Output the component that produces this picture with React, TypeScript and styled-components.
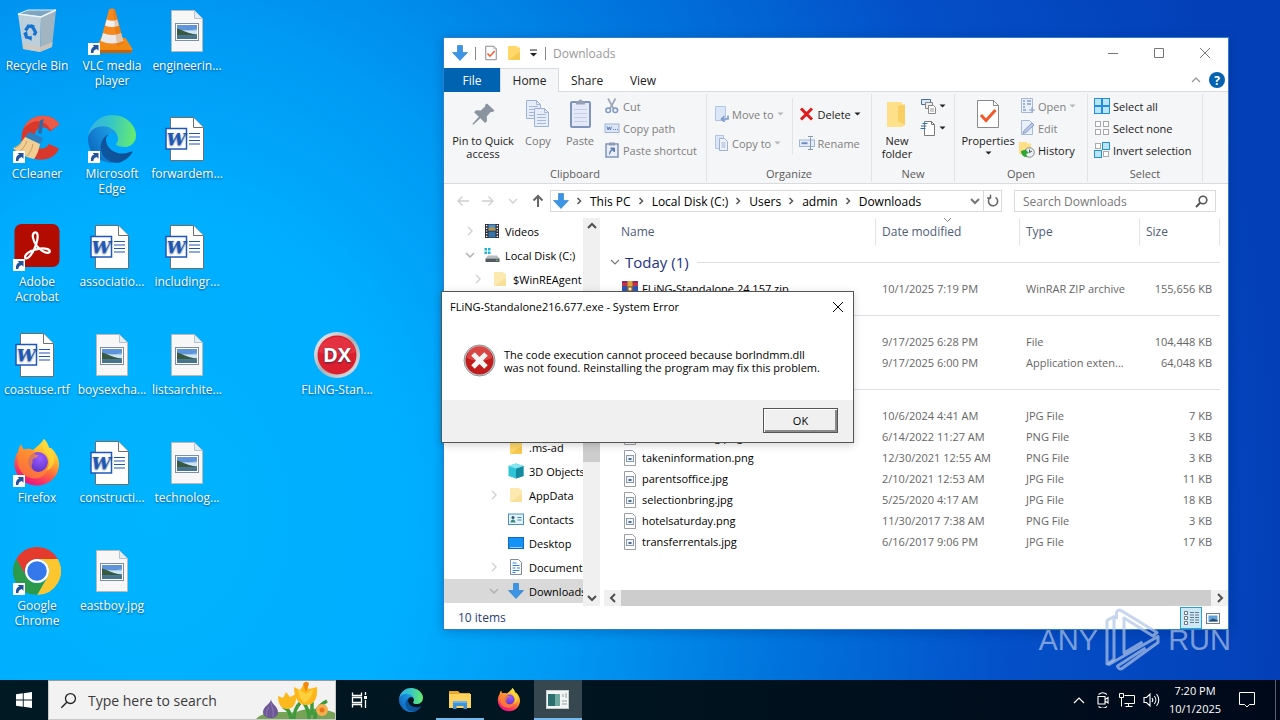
import React from "react";
import styled, { createGlobalStyle, css } from "styled-components";

const GlobalStyle = createGlobalStyle`
  *, *::before, *::after { box-sizing: border-box; }
  html, body { margin: 0; padding: 0; }
  body { font-family: "Open Sans", "Noto Sans", sans-serif; font-size: 11px; color: #000; }
  button, input { font: inherit; color: inherit; }
  button { margin: 0; padding: 0; border: 0; background: none; cursor: default; }
  svg { display: block; flex: none; }
`;

/* ---------- shell ---------- */

const Screen = styled.div`
  display: flex;
  flex-direction: column;
  height: 100vh;
  overflow: hidden;
`;

const Desktop = styled.main`
  position: relative;
  flex: 1;
  min-height: 0;
  overflow: hidden;
  background: radial-gradient(ellipse 80% 180% at 12% 76%, #00b4ff 0%, #00aeff 25%, #009bf4 40%, #0074dc 62%, #0450c8 84%, #0340b8 110%);
`;

const IconGrid = styled.ul`
  display: grid;
  grid-auto-flow: column;
  grid-template-rows: repeat(6, 108px);
  grid-template-columns: repeat(5, 75px);
  justify-content: start;
  margin: 0;
  padding: 0;
  list-style: none;
`;

const Shortcut = styled.li<{ $col: number; $row: number }>`
  grid-column: ${(p) => p.$col};
  grid-row: ${(p) => p.$row};
`;

const ShortcutButton = styled.button`
  display: flex;
  flex-direction: column;
  align-items: center;
  gap: 3px;
  width: 74px;
  padding: 7px 0 0;
  color: #fff;
  font-size: 12px;
  line-height: 15px;
  white-space: nowrap;
  text-shadow: 0 1px 2px rgba(0, 40, 90, 0.7);
`;

/* ---------- explorer window ---------- */

const Explorer = styled.section`
  position: absolute;
  left: 443px;
  top: 37px;
  right: 51px;
  bottom: 50px;
  display: flex;
  flex-direction: column;
  border: 1px solid #2f7fc8;
  background: #fff;
  box-shadow: 0 2px 10px rgba(0, 20, 80, 0.25);
`;

const TitleBar = styled.header`
  display: flex;
  align-items: center;
  height: 30px;
  padding-left: 8px;
`;

const QuickTools = styled.div`
  display: flex;
  align-items: center;
  gap: 7px;
`;

const Bar = styled.span`
  width: 1px;
  height: 13px;
  background: #888;
`;

const WindowTitle = styled.h1`
  flex: 1;
  margin: 0 0 0 7px;
  color: #999;
  font-size: 12px;
  font-weight: 400;
`;

const CaptionButton = styled.button`
  display: grid;
  place-items: center;
  width: 46px;
  height: 28px;
  color: #777;
`;

const TabStrip = styled.nav`
  display: flex;
  align-items: stretch;
  height: 24px;
  border-bottom: 1px solid #dadbdc;
`;

const Tab = styled.button<{ $kind?: "file" | "active" }>`
  width: 56px;
  height: 24px;
  font-size: 12px;
  color: #222;
  ${(p) => p.$kind === "file" && css`background: #0063b1; color: #fff;`}
  ${(p) => p.$kind === "active" && css`
    width: 59px;
    background: #f5f6f7;
    border: 1px solid #dadbdc;
    border-bottom: 0;
  `}
`;

const TabTools = styled.div`
  display: flex;
  align-items: center;
  gap: 8px;
  margin-left: auto;
  padding-right: 3px;
`;

const Ribbon = styled.div`
  display: flex;
  height: 92px;
  background: #f5f6f7;
  border-bottom: 1px solid #dadbdc;
`;

const Group = styled.section<{ $width: number }>`
  display: flex;
  flex-direction: column;
  width: ${(p) => p.$width}px;
  margin: 2px 0 1px;
  border-right: 1px solid #e2e3e4;
`;

const GroupBody = styled.div`
  display: flex;
  flex: 1;
  padding: 0 4px;
`;

const GroupLabel = styled.h2`
  margin: 0;
  color: #5a5a5a;
  font-size: 11px;
  font-weight: 400;
  line-height: 16px;
  text-align: center;
`;

const Stack = styled.div<{ $wide?: boolean }>`
  display: flex;
  flex-direction: column;
  gap: ${(p) => (p.$wide ? 9 : 2)}px;
  padding-top: ${(p) => (p.$wide ? 10 : 2)}px;
`;

const BigButton = styled.button<{ $width: number; $off?: boolean }>`
  display: flex;
  flex-direction: column;
  align-items: center;
  align-self: flex-start;
  gap: 4px;
  width: ${(p) => p.$width}px;
  padding-top: 4px;
  color: ${(p) => (p.$off ? "#777" : "#222")};
  font-size: 11px;
  line-height: 13px;
  white-space: nowrap;
`;

const SmallButton = styled.button<{ $off?: boolean }>`
  display: flex;
  align-items: center;
  gap: 3px;
  height: 20px;
  padding: 0 2px;
  color: ${(p) => (p.$off ? "#808080" : "#222")};
  font-size: 11px;
  white-space: nowrap;
`;

const Divider = styled.span`
  width: 1px;
  height: 56px;
  margin: 4px 4px 0 6px;
  background: #e2e3e4;
`;

/* ---------- address row ---------- */

const AddressRow = styled.div`
  display: flex;
  align-items: center;
  gap: 12px;
  height: 34px;
  padding: 0 12px 0 11px;
`;

const NavButtons = styled.div`
  display: flex;
  gap: 9px;
  margin-right: -8px;
  button { display: grid; place-items: center; width: 16px; height: 20px; }
`;

const AddressBox = styled.div`
  display: flex;
  align-items: center;
  flex: 1;
  height: 22px;
  padding-left: 2px;
  border: 1px solid #d9d9d9;
`;

const Crumbs = styled.ol`
  display: flex;
  flex: 1;
  margin: 0;
  padding: 0;
  list-style: none;
  font-size: 12px;
  li { display: flex; align-items: center; }
  li svg { margin: 0 6px 0 5px; }
  a { color: #000; text-decoration: none; }
`;

const BoxButton = styled.button<{ $line?: boolean }>`
  display: grid;
  place-items: center;
  width: ${(p) => (p.$line ? 18 : 16)}px;
  height: 20px;
  border-left: ${(p) => (p.$line ? "1px solid #d9d9d9" : "0")};
`;

const SearchBox = styled.label`
  display: flex;
  align-items: center;
  width: 202px;
  height: 22px;
  padding: 0 7px 0 8px;
  border: 1px solid #d9d9d9;
  input {
    flex: 1;
    min-width: 0;
    padding: 0;
    border: 0;
    outline: 0;
    background: none;
    font-size: 12px;
  }
  input::placeholder { color: #777; opacity: 1; }
`;

/* ---------- body ---------- */

const Body = styled.div`
  display: flex;
  flex: 1;
  min-height: 0;
`;

const Tree = styled.nav`
  width: 139px;
  padding-top: 1px;
  overflow: hidden;
`;

const TreeRow = styled.a<{ $depth: number; $selected?: boolean }>`
  display: flex;
  align-items: center;
  gap: 5px;
  height: 24px;
  padding-left: ${(p) => 20 + p.$depth * 8}px;
  background: ${(p) => (p.$selected ? "#d9d9d9" : "transparent")};
  color: #000;
  font-size: 11px;
  text-decoration: none;
  white-space: nowrap;
`;

const Twisty = styled.span`
  display: grid;
  place-items: center;
  flex: none;
  width: 12px;
  margin-right: 3px;
`;

const TreeGap = styled.div`
  height: 144px;
`;

const Scroll = styled.div<{ $dir: "v" | "h" }>`
  display: flex;
  flex-direction: ${(p) => (p.$dir === "v" ? "column" : "row")};
  justify-content: space-between;
  align-items: stretch;
  flex: none;
  ${(p) => (p.$dir === "v" ? "width: 17px;" : "height: 16px;")}
  background: #f0f0f0;
  button { display: grid; place-items: center; width: 17px; height: 16px; }
`;

const Thumb = styled.span<{ $dir: "v" | "h" }>`
  flex: 1;
  background: #cdcdcd;
  ${(p) => p.$dir === "v" && css`margin: 60px 0 128px;`}
`;

const Pane = styled.div`
  display: flex;
  flex-direction: column;
  flex: 1;
  min-width: 0;
  margin-left: 4px;
`;

const FileArea = styled.div`
  flex: 1;
  min-height: 0;
  overflow: hidden;
  padding-right: 8px;
`;

const FileTable = styled.table`
  width: 100%;
  table-layout: fixed;
  border-collapse: separate;
  border-spacing: 0;
  font-size: 12px;
  th, td {
    padding: 0 6px;
    font-weight: 400;
    text-align: left;
    white-space: nowrap;
    overflow: hidden;
    line-height: 16px;
  }
  thead th { position: relative; height: 28px; color: #4c607a; border-right: 1px solid #e5e5e5; }
  td { height: 21px; color: #666; font-size: 11px; }
  th:first-child { padding-left: 17px; }
  td:first-child { padding-left: 18px; color: #000; }
  td:last-child { padding-right: 8px; text-align: right; }
`;

const SortMark = styled.span`
  position: absolute;
  top: 0;
  left: calc(50% - 5px);
`;

const GroupCell = styled.th`
  &&&&:first-child { height: 32px; padding: 0 0 0 6px; }
`;

const GroupLine = styled.div`
  display: flex;
  align-items: center;
  gap: 5px;
  color: #1e3287;
  font-size: 15px;
  &::after { content: ""; flex: 1; height: 1px; margin-left: 3px; background: #dcdfe4; }
`;

const FileName = styled.span`
  display: flex;
  align-items: center;
  gap: 4px;
`;

const StatusBar = styled.footer`
  display: flex;
  align-items: center;
  height: 23px;
  padding: 0 7px 0 14px;
  color: #2a3f75;
  font-size: 12px;
`;

const ViewButtons = styled.div`
  display: flex;
  align-items: center;
  gap: 3px;
  margin-left: auto;
`;

const ViewButton = styled.button<{ $on?: boolean }>`
  display: grid;
  place-items: center;
  width: ${(p) => (p.$on ? 22 : 16)}px;
  height: 22px;
  background: ${(p) => (p.$on ? "#cce8f6" : "transparent")};
  border: ${(p) => (p.$on ? "1px solid #26a0da" : "0")};
`;

/* ---------- error dialog ---------- */

const Dialog = styled.section`
  position: absolute;
  left: 441px;
  top: 291px;
  width: 413px;
  border: 1px solid #555;
  background: #fff;
  box-shadow: 0 2px 8px rgba(0, 0, 0, 0.18);
`;

const DialogTitle = styled.header`
  display: flex;
  align-items: center;
  justify-content: space-between;
  height: 29px;
  padding-left: 8px;
  h2 { margin: 0; font-size: 11px; font-weight: 400; }
  button { display: grid; place-items: center; width: 31px; height: 29px; }
`;

const DialogBody = styled.div`
  display: flex;
  align-items: center;
  gap: 8px;
  height: 79px;
  padding-left: 21px;
  p { margin: 0; font-size: 11px; line-height: 13px; white-space: nowrap; }
`;

const DialogFooter = styled.footer`
  display: flex;
  justify-content: flex-end;
  padding: 8px 15px 9px;
  background: #f0f0f0;
`;

const OkButton = styled.button`
  width: 75px;
  height: 25px;
  border: 1px solid #555;
  background: #f0f0f0;
  box-shadow: inset 1px 1px 0 #fff, inset -2px -2px 0 #8a8a8a;
`;

/* ---------- watermark ---------- */

const Watermark = styled.div`
  position: absolute;
  right: 49px;
  bottom: 8px;
  display: flex;
  align-items: center;
  gap: 7px;
  color: rgba(176, 196, 230, 0.7);
  font-family: "Liberation Sans Narrow", "Liberation Sans", sans-serif;
  font-size: 29px;
  line-height: 64px;
`;

/* ---------- taskbar ---------- */

const Taskbar = styled.footer`
  display: flex;
  align-items: stretch;
  height: 40px;
  background: linear-gradient(to right, #001923, #001620 40%, #00091a);
  color: #fff;
`;

const TaskButton = styled.button<{ $open?: boolean; $active?: boolean }>`
  display: grid;
  place-items: center;
  width: 48px;
  border-bottom: 2px solid transparent;
  border-top: 2px solid transparent;
  ${(p) => p.$open && css`border-bottom-color: #76b9ed;`}
  ${(p) => p.$active && css`background: #36474f; border-top-color: #36474f;`}
`;

const TaskSearch = styled.label`
  display: flex;
  align-items: center;
  gap: 11px;
  width: 288px;
  padding-left: 11px;
  border: 1px solid #c8c8c8;
  border-top: 1px solid #999;
  background: #f2f2f2;
  overflow: hidden;
  input {
    flex: 1;
    min-width: 0;
    padding: 0;
    border: 0;
    outline: 0;
    background: none;
    font-size: 14px;
  }
  input::placeholder { color: #3b3b3b; opacity: 1; }
`;

const TaskApps = styled.div`
  display: flex;
  gap: 1px;
  margin-left: 3px;
`;

const Tray = styled.div`
  display: flex;
  align-items: center;
  margin-left: auto;
  button { display: grid; place-items: center; width: 24px; height: 40px; }
`;

const Clock = styled.time`
  width: 64px;
  margin-right: 8px;
  font-size: 11px;
  line-height: 18px;
  text-align: center;
  white-space: nowrap;
`;

const ShowDesktop = styled.span`
  width: 5px;
  height: 40px;
  margin-left: 16px;
  border-left: 1px solid #55606c;
`;

/* ---------- drawings ---------- */

const Badge = () => (
  <g>
    <rect x="0" y="36" width="12" height="12" fill="#fff" />
    <path d="M3 46c-.4-3.400.8-5.600 3.200-6.400L4.600 38H10.500v5.800L8.700 42.100C6.500 43 5.300 44.200 5.400 46z" fill="#22549b" />
  </g>
);

const Pic = ({ size = 48, children }: { size?: number; children: React.ReactNode }) => (
  <svg width={size} height={size} viewBox="0 0 48 48" aria-hidden="true">{children}</svg>
);

const RecycleIcon = () => (
  <Pic>
    <path d="M5 7L15 3H43L28 10z" fill="#7fa6c0" stroke="#e3edf4" />
    <path d="M5 7L28 10 27 45 10 42z" fill="#bccfdb" />
    <path d="M43 3L28 10 27 45 39 40z" fill="#a0b4c2" />
    <path d="M5 7L28 10 43 3" fill="none" stroke="#eef4f8" strokeWidth="1.500" />
    <path d="M10 37L27 40 39.500 35 39 40 27 45 10 42z" fill="#d3c8bc" opacity=".8" />
    <g fill="none" stroke="#1473cf" strokeWidth="3.200">
      <path d="M12.500 23.500l3-4.500 3.500.7" />
      <path d="M20 20.500l2.600 5-1.600 2.800" />
      <path d="M18.500 31.200l-5-1-1.500-4" />
    </g>
    <path d="M17.500 17l4.500 1.500-3 4zM18.500 28.500v5.500l-3.500-3zM10 26.500l4-2.500.8 4.500z" fill="#1473cf" />
  </Pic>
);

const VlcIcon = () => (
  <Pic>
    <path d="M13 31H37.500L44.500 42 43 46H10L7 43z" fill="#f08a13" />
    <path d="M8 43H44l-1 3H10z" fill="#c9600a" />
    <path d="M21 2.500Q24 .5 27 2.500L36 36Q24 43 12 36z" fill="#f5881f" />
    <path d="M18.700 12.500Q24 15 29.300 12.500L31 18.500Q24 21.500 17 18.500z" fill="#f1f1f1" />
    <path d="M15 26Q24 30 33 26L35.500 34Q24 39 12.600 34z" fill="#e9e9e9" />
    <path d="M25 2.500L27 2.500 36 36Q33 38 29 39z" fill="#c75a00" opacity=".25" />
    <Badge />
  </Pic>
);

const ImageFileIcon = () => (
  <Pic>
    <path d="M8.500 3.500H31.500L39.500 11.500V44.500H8.500z" fill="#f7f7f7" stroke="#b9b9b9" />
    <path d="M31.500 3.500V11.500H39.500z" fill="#e2edf3" stroke="#b9c4ca" />
    <rect x="12.500" y="16.500" width="23" height="17" fill="#fff" stroke="#7d8ea3" />
    <rect x="14" y="18" width="20" height="14" fill="#7fb2e6" />
    <path d="M14 18h20v3.500l-7 2-13-1z" fill="#5e95da" />
    <path d="M14 23.500h20v4H14z" fill="#cfe5f2" />
    <path d="M14 21.500c5 1.500 11 4.500 16 5.500l4 .5v1H14z" fill="#38593f" />
    <path d="M14 28.300h20V32H14z" fill="#46748f" />
  </Pic>
);

const WordFileIcon = () => (
  <Pic>
    <path d="M7.500 2.500H30.500L40.500 12.500V45.500H7.500z" fill="#fff" stroke="#6e6e6e" />
    <path d="M30.500 2.500V12.500H40.500" fill="#fff" stroke="#6e6e6e" />
    <path d="M26 18.500H37M26 22H37M26 25.500H37M26 29H37" stroke="#1f57b5" strokeWidth="1.200" />
    <rect x="3" y="13.500" width="20.500" height="20.500" fill="#fff" stroke="#1f57b5" strokeWidth="1.500" />
    <text x="13.200" y="30" textAnchor="middle" fontFamily="DejaVu Serif, serif" fontWeight="700" fontStyle="italic" fontSize="17" fill="#1f57b5">W</text>
  </Pic>
);

const CCleanerIcon = () => (
  <Pic>
    <path d="M46.500 9.500C41 0 27 -2 17 5 6 13 6 32 15 40c9 8 26 6 31-6.500l-10-4.500c-3 5-8 6-12 2.500-4.500-4.500-4-13.500 1-17.500 4-3 9-2 12 2.500z" fill="#d9382c" />
    <path d="M46.500 9.500C41 0 27 -2 17 5c-3 2-5 5-6.500 8.500C19 4 31 3 38 15z" fill="#ee5a48" />
    <path d="M27 5.500l3.500-1.500L28.500 19l-3.500-1z" fill="#2b6ca8" />
    <path d="M17 17l13 6c-.5 3-2 5-4 6.500L12 23c1-3 3-5 5-6z" fill="#2f7fc0" />
    <path d="M12 22l15 7c-1 6-3 11-6 15C13 42 4 38 0 33c5-1.500 9-6 12-11z" fill="#f1cf94" />
    <path d="M14 26c-2 5-5 9-8 11M20 29c-1 5-3 9-6 12M8 28c-2 3-4 4-6 5" stroke="#c99b56" fill="none" />
    <Badge />
  </Pic>
);

const EdgeShapes = () => (
  <g transform="scale(.1875)">
    <defs>
      <linearGradient id="edgeDark" x1=".2" y1="1" x2="1" y2=".4"><stop offset="0" stopColor="#0c59a4" /><stop offset="1" stopColor="#114a8b" /></linearGradient>
      <linearGradient id="edgeMid" x1=".9" y1=".4" x2=".1" y2=".9"><stop offset="0" stopColor="#1b9de2" /><stop offset=".5" stopColor="#1482d4" /><stop offset="1" stopColor="#0f62b5" /></linearGradient>
      <linearGradient id="edgeGreen" x1="0" y1=".4" x2="1" y2=".5"><stop offset="0" stopColor="#35b1e6" /><stop offset=".45" stopColor="#36c6c6" /><stop offset="1" stopColor="#66eb6e" /></linearGradient>
    </defs>
    <path transform="translate(-4.630 -4.920)" fill="url(#edgeDark)" d="M235.680 199.460a93.730 93.730 0 01-10.540 4.710 101.870 101.870 0 01-35.900 6.460c-47.320 0-88.540-32.550-88.540-74.320A31.480 31.480 0 01117.130 109c-42.800 1.800-53.800 46.400-53.800 72.530 0 73.880 68.090 81.370 82.760 81.370 7.910 0 19.840-2.300 27-4.560l1.310-.44a128.340 128.340 0 0066.600-52.800 4 4 0 00-5.320-5.640z" />
    <path fill="url(#edgeMid)" d="M105.730 241.420a79.200 79.200 0 01-22.740-21.340 80.720 80.720 0 0129.530-120c3.120-1.470 8.450-4.130 15.540-4a32.350 32.350 0 0125.690 13 31.880 31.880 0 016.360 18.660c0-.21 24.460-79.600-80-79.600-43.900 0-80 41.660-80 78.210a130.150 130.150 0 0012.110 56 128 128 0 00156.380 67.110 75.550 75.550 0 01-62.780-8z" />
    <path fill="url(#edgeGreen)" d="M152.290 148.860c-.81 1.050-3.300 2.500-3.300 5.660 0 2.610 1.700 5.120 4.720 7.230 14.380 10 41.490 8.680 41.560 8.680a59.560 59.560 0 0030.270-8.350 61.380 61.380 0 0030.430-52.880c.26-22.410-8-37.310-11.340-43.910C223.460 23.840 177.720 0 128 0A128 128 0 000 126.200c.48-36.540 36.800-66.050 80-66.050 3.500 0 23.460.34 42 10.070 16.340 8.580 24.900 18.940 30.850 29.210 6.180 10.670 7.280 24.150 7.280 29.520s-2.740 13.330-7.840 19.910z" />
  </g>
);

const AcrobatIcon = () => (
  <Pic>
    <rect x="1.500" y="1" width="45" height="43" rx="7" fill="#b40b00" />
    <path d="M21.800 9.600c2.600-.9 3.400 2.600 2.500 7.200-1.300 6.600-5 13.700-8.300 17.200-2.200 2.400-4.700 1.500-3.700-1 1.400-3.500 8-6.500 14.500-7.300 5.200-.7 9.800.3 10 2.600.1 2-3.300 2.200-7.300-.3-4.500-2.800-8.500-8.300-9.500-13.200-.6-2.900.3-4.700 1.800-5.200z" fill="none" stroke="#fff" strokeWidth="2.200" />
    <Badge />
  </Pic>
);

const FirefoxShapes = () => (
  <g>
    <defs>
      <linearGradient id="foxBody" x1=".8" y1="0" x2=".3" y2="1"><stop offset="0" stopColor="#fff14f" /><stop offset=".3" stopColor="#ffc02e" /><stop offset=".58" stopColor="#ff7139" /><stop offset=".85" stopColor="#f5286b" /><stop offset="1" stopColor="#e31587" /></linearGradient>
      <radialGradient id="foxCore" cx=".6" cy=".3" r=".8"><stop offset="0" stopColor="#9a5bff" /><stop offset="1" stopColor="#5a2fc2" /></radialGradient>
    </defs>
    <path d="M31 0c3 3 4.500 6.500 5 9 1.500-.5 3 .5 4.500 2.500 3 4 5.500 8 5.500 14C46 37 36.500 46.500 24 46.500S1.500 37 1.500 24.500c0-4.500 1.300-9 4-12.500 0-2.500 1-4.500 3-6.500.3 2.500 1 4 2.500 5 3-1 6-1 9 .5C23 8 28 5 31 0z" fill="url(#foxBody)" />
    <circle cx="25" cy="23" r="10" fill="url(#foxCore)" />
    <path d="M5.500 12c0-2.500 1-4.500 3-6.500.3 2.500 1 4 2.500 5 4-1 8-.5 10.500 2-1.500 2.500 2 3.500 4 3.500-.5 3-5 3-6 5 0 1.500.5 2.500-.5 4-1.500 5 3 8.500 7.500 8 4-.5 7.500-4 8-9 2 8-3.500 15-11.500 15.500C13 40 6 33 5 24c-.5-4-.5-8 .5-12z" fill="#ff8a30" opacity=".7" />
    <path d="M31 0c-3 6-1 10 2 14 4 6 4 13 0 18 6-2 9-8 8-14-1-4-3-6-5-9-.5-2.500-2-6-5-9z" fill="#ffd83a" opacity=".8" />
  </g>
);

const ChromeIcon = () => (
  <Pic>
    <path d="M24 12H44.800A24 24 0 0 0 3.200 12L13.600 30A12 12 0 0 1 24 12z" fill="#e53b2e" />
    <path d="M44.800 12A24 24 0 0 1 24 48L34.400 30A12 12 0 0 0 24 12z" fill="#fcc62f" />
    <path d="M3.200 12A24 24 0 0 0 24 48L34.400 30A12 12 0 0 1 13.600 30z" fill="#2b9a4a" />
    <circle cx="24" cy="24" r="12" fill="#fff" />
    <circle cx="24" cy="24" r="9.800" fill="#3478ec" />
    <Badge />
  </Pic>
);

const DxIcon = () => (
  <Pic>
    <defs>
      <linearGradient id="dxRim" x1="0" y1="0" x2="1" y2="1"><stop offset="0" stopColor="#f4f4f4" /><stop offset=".5" stopColor="#a9b1b6" /><stop offset="1" stopColor="#e6e6e6" /></linearGradient>
    </defs>
    <circle cx="24" cy="24" r="23" fill="url(#dxRim)" />
    <circle cx="24" cy="24" r="19.500" fill="#dc1f2e" />
    <path d="M5 21a19.500 19.500 0 0 1 38 0c-10 4-27 4-38 0z" fill="#ee4552" opacity=".5" />
    <text x="24" y="31" textAnchor="middle" fontFamily="Open Sans, sans-serif" fontWeight="700" fontSize="20" fill="#fff">DX</text>
  </Pic>
);

const I = ({ w = 16, h = 16, vb, children }: { w?: number; h?: number; vb?: string; children: React.ReactNode }) => (
  <svg width={w} height={h} viewBox={vb ?? `0 0 ${w} ${h}`} fill="none" aria-hidden="true">{children}</svg>
);

const DownArrow = () => (
  <I><path d="M5.500.5h5v7H15.500L8 15.500.5 7.500h5z" fill="#3b95e4" stroke="#2479c8" strokeWidth=".6" /></I>
);
const Folder = ({ pale }: { pale?: boolean }) => (
  <I><path d="M2 1h9.500v1.500H14V15H2z" fill={pale ? "#fbe9b0" : "#ffd869"} /><path d="M11 8.500l3-1V15H3z" fill={pale ? "#f7dc93" : "#f4c344"} opacity=".7" /></I>
);
const Caret = ({ off }: { off?: boolean }) => (
  <I w={7} h={4}><path d="M.5.5h6l-3 3z" fill={off ? "#b5b5b5" : "#222"} /></I>
);
const Chevron = ({ dir, color = "#666", w = 2 }: { dir: "up" | "down" | "left" | "right"; color?: string; w?: number }) => (
  <I w={10} h={10}>
    <path
      d={{ up: "M1 7l4-4 4 4", down: "M1 3l4 4 4-4", left: "M7 1L3 5l4 4", right: "M3 1l4 4-4 4" }[dir]}
      stroke={color}
      strokeWidth={w}
    />
  </I>
);
const SmallChevron = () => <I w={10} h={10}><path d="M3.500 2l3 3-3 3" stroke="#555" strokeWidth="1.500" /></I>;
const DocCheck = ({ big }: { big?: boolean }) => (
  <I w={big ? 32 : 16} h={big ? 32 : 16} vb="0 0 32 32">
    <path d="M5.500 2.500h16l5 5v22h-21z" fill="#fff" stroke="#8a8a8a" strokeWidth={big ? 1 : 2} />
    <path d="M21.500 2.500v5h5" stroke="#8a8a8a" />
    <path d="M9 17l5 5.500L23.500 12" stroke="#f0592b" strokeWidth="3" />
  </I>
);
const Pin = () => (
  <I w={32} h={32}><path d="M20 5.500l7.500 7-2 1.800-1.600-.5-4.200 4.600.4 4.600-2 2-4.800-4.700-6.800 6.200-1 .1.200-1.100 6.100-6.700-4.700-4.600 2-2 4.700.4 4.500-4.300-.4-1.400z" fill="#8a949e" /></I>
);
const Sheet = ({ x, y }: { x: number; y: number }) => (
  <g transform={`translate(${x} ${y})`} stroke="#9fb1d2">
    <path d="M.5.500h10l4 4v14H.5z" fill="#e6edf9" />
    <path d="M10.500.5v4h4M3 6.500h9M3 9.500h9M3 12.500h9M3 15.500h9" strokeWidth=".9" />
  </g>
);
const CopyBig = () => <I w={32} h={32}><Sheet x={4} y={2} /><Sheet x={12} y={10} /></I>;
const PasteBig = () => (
  <I w={32} h={32}>
    <rect x="7" y="4" width="19" height="25" rx="1" fill="#e3e9f6" stroke="#8094bb" strokeWidth="2" />
    <path d="M12 6.500V3.500h2.500a2 2 0 0 1 4 0H21v3z" fill="#97a1b5" />
    <path d="M10 11.500h13M10 15.500h13M10 19.500h13M10 23.500h13" stroke="#c3cfe6" />
  </I>
);
const Cut = () => (
  <I><path d="M4 .5l5.500 10M11.500.5L6 10.500" stroke="#9aa6b8" strokeWidth="1.600" /><circle cx="4.200" cy="12.300" r="2.300" stroke="#7f97c0" strokeWidth="1.500" /><circle cx="11.300" cy="12.300" r="2.300" stroke="#7f97c0" strokeWidth="1.500" /></I>
);
const CopyPath = () => (
  <I><rect x="1" y="4" width="14" height="8.500" fill="#dce6f6" stroke="#9fb4da" /><path d="M3 6.500l1 3.500 1.200-3 1.200 3 1-3.500" stroke="#5d7db8" /><path d="M9 9.500h1M11 9.500h1M13 9.500h1" stroke="#5d7db8" /></I>
);
const PasteShortcut = () => (
  <I><rect x="2" y="2" width="12" height="13" fill="#e9eef8" stroke="#8094bb" strokeWidth="1.500" /><rect x="5" y=".5" width="6" height="3" fill="#8e9ab2" /><path d="M5.500 12.500c0-3 1-4.500 3-5M6.500 6h4v4z" stroke="#5d7db8" fill="#5d7db8" /></I>
);
const MoveTo = () => (
  <I><path d="M2.500.5h10v14h-10z" fill="#dbe6f7" stroke="#b3c5e4" /><path d="M15 9.500v3.500H9M11.500 10l-3 3 3 3" stroke="#7d9acb" strokeWidth="1.600" /></I>
);
const CopyTo = () => (
  <I><path d="M2.500.5h8v13h-8z" fill="#dbe6f7" stroke="#b3c5e4" /><path d="M6.500 3.500h5l3 3v9h-8z" fill="#eef3fb" stroke="#9fb1d2" /><path d="M8.500 8h4M8.500 10h4M8.500 12h4" stroke="#9fb1d2" /></I>
);
const DeleteX = () => <I><path d="M2 2.500l11 11M13 2.500l-11 11" stroke="#e01b1b" strokeWidth="3" /></I>;
const Rename = () => (
  <I><rect x=".5" y="5" width="15" height="6.500" fill="#e6edf9" stroke="#9fb4da" /><path d="M2.500 8.200h6" stroke="#6f8cc4" strokeWidth="2" /><path d="M11.500 2.500v12M9 1.500h5M9 14.500h5" stroke="#8597b5" /></I>
);
const NewFolder = () => (
  <I w={32} h={32}><path d="M6 4h14.500l1 2.500H24V27l-3 2H6z" fill="#ffe08a" /><path d="M17 8l7-1.500V27l-7-4z" fill="#f9cf62" /></I>
);
const NewItem = () => (
  <I><path d="M1.500 1.500h9v5h-9z" fill="#dcebf9" stroke="#4a6f9c" /><path d="M5.500 4.500h7v6h-7z" fill="#eee" stroke="#888" /><path d="M8.500 7.500h5l2 2v6h-7z" fill="#fff" stroke="#888" /><path d="M10 11h4M10 13h4" stroke="#999" /></I>
);
const EasyAccess = () => (
  <I><path d="M4.500 1.500h7l3 3v11h-10z" fill="#fff" stroke="#7a7a7a" /><path d="M11.500 1.500v3h3" stroke="#7a7a7a" /><path d="M2.500 3.500h5M1 6h5.500M.5 8.500h5" stroke="#2f6fb5" strokeWidth="1.200" /></I>
);
const OpenIcon = () => (
  <I><path d="M2.500.5h11v14h-11z" fill="#eaf0fa" stroke="#a9b8d4" /><path d="M4 3h2M4 6h2M4 9h2M8 3h4M8 6h4M4 12h3" stroke="#8aa0c8" strokeWidth="1.500" /><path d="M13 9v6M10 12h6" stroke="#8aa0c8" /></I>
);
const EditIcon = () => (
  <I><path d="M2.500.5h8l3 3v11h-11z" fill="#eaf0fa" stroke="#a9b8d4" /><path d="M4 13.500l1-3L13 3l2 2-8 7.500z" fill="#b9c8e6" stroke="#8aa0c8" /></I>
);
const HistoryIcon = () => (
  <I><path d="M0 0h8v1.500h4V12H0z" fill="#ffdf86" /><circle cx="10.500" cy="10.500" r="4.800" fill="#e9eef2" stroke="#8a8a8a" /><path d="M10.500 7.500v3l2.500-1.500" stroke="#555" /><path d="M2 9c0 4 3 6.500 6.500 6l-1.500-3 3-1-3.500-3.500" fill="#2fa637" /></I>
);
const Squares = ({ mode }: { mode: "all" | "none" | "invert" }) => {
  const on = { all: [1, 1, 1, 1], none: [0, 0, 0, 0], invert: [0, 1, 1, 0] }[mode];
  return (
    <I>
      {on.map((v, i) => (
        <rect key={i} x={(i % 2) * 8 + (v ? 0.5 : 1.5)} y={(i > 1 ? 8 : 0) + (v ? 0.5 : 1.5)} width={v ? 7 : 5} height={v ? 7 : 5}
          fill={v ? "#bfe3fb" : "#fff"} stroke={v ? "#1f8fe0" : "#a9a9a9"} />
      ))}
    </I>
  );
};
const Arrow = ({ dir, off }: { dir: "left" | "right" | "up"; off?: boolean }) => (
  <I w={14} h={14}>
    <path d={{ left: "M13 7H2M6.500 2.500L2 7l4.500 4.500", right: "M1 7h11M7.500 2.500L12 7l-4.500 4.500", up: "M7 13V2M2.500 6.500L7 2l4.500 4.500" }[dir]}
      stroke={off ? "#cfcfcf" : "#666"} strokeWidth={off ? 1.300 : 2} />
  </I>
);
const Refresh = () => (
  <I w={14} h={14}><path d="M9.500 3.300A4.600 4.600 0 1 1 4.300 3.500M4.500.8v3.200h-3.400" stroke="#666" strokeWidth="1.500" /></I>
);
const Lens = ({ size = 13, flip, color = "#555" }: { size?: number; flip?: boolean; color?: string }) => (
  <I w={size} h={size} vb="0 0 13 13"><circle cx="8" cy="5" r="3.800" stroke={color} strokeWidth={flip ? 1 : 1.600} /><path d="M5.200 7.800L1 12" stroke={color} strokeWidth={flip ? 1.100 : 2} /></I>
);
const Videos = () => (
  <I><rect x="1" y="1" width="14" height="14" fill="#2b2f36" /><rect x="4.500" y="1.500" width="7" height="6" fill="#4f91cf" /><rect x="4.500" y="8.500" width="7" height="6" fill="#3672a8" /><path d="M4.500 5.500l4-1.500 3 2v1.500h-7z" fill="#c08f3c" /><path d="M2.700 2v13M13.300 2v13" stroke="#fff" strokeWidth="1.300" strokeDasharray="1.200 1.500" /></I>
);
const Disk = () => (
  <I><path d="M.5 1h2.500v2.500H.5zM4 1h2.500v2.500H4zM.5 4.500h2.500V7H.5zM4 4.500h2.500V7H4z" fill="#19b5d8" /><path d="M4 8.500h9l2.500 3H1.500z" fill="#b6bcc1" /><path d="M1.500 11.500h14V15h-14z" fill="#53595f" /><circle cx="13" cy="13.300" r=".8" fill="#6be07a" /></I>
);
const Cube = () => (
  <I><path d="M8 .5l7.500 2.500v10L8 15.500.5 13V3z" fill="#2fc3d8" /><path d="M8 5.500L15.500 3v10L8 15.500z" fill="#14899f" /><path d="M.5 3L8 .5 15.500 3 8 5.500z" fill="#86e6f0" /></I>
);
const Contacts = () => (
  <I><rect x=".5" y="3" width="15" height="10.500" fill="#e4f2fc" stroke="#4b8fc9" /><circle cx="5" cy="6.500" r="1.500" fill="#31516e" /><path d="M2.500 11.500c0-4 5-4 5 0z" fill="#3c8d79" /><path d="M9.500 6.500h4M9.500 9h4" stroke="#3c85c4" strokeWidth="1.200" /></I>
);
const DesktopGlyph = () => <I><rect x=".5" y="2.500" width="15" height="11" fill="#1592f5" stroke="#0d6abf" /><path d="M2 12.500h12" stroke="#8fd0ff" /></I>;
const Documents = () => (
  <I><path d="M2.500.5h8l3 3v12h-11z" fill="#fff" stroke="#7f8c99" /><path d="M4.500 4h4M4.500 6.500h7M4.500 9h3M9 9h3M4.500 11.500h7M4.500 13.500h3" stroke="#2f88cd" strokeWidth="1.200" /></I>
);
const ImgSmall = () => (
  <I><path d="M2.500.5h8l3 3v12h-11z" fill="#fff" stroke="#9a9fa5" /><rect x="4.500" y="5.500" width="7" height="6" fill="#eef4fa" stroke="#8b98a8" /><path d="M6.500 8h3v2h-3z" fill="#4d6d92" /></I>
);
const Rar = () => (
  <I><path d="M0 0h16v5H0z" fill="#c8323c" /><path d="M0 5h16v5H0z" fill="#2c55b8" /><path d="M0 10h16v5H0z" fill="#2b8a3c" /><path d="M0 1h16" stroke="#7a2a7a" strokeWidth="1.500" /><path d="M5.500 0h5v15h-5z" fill="#d8a53a" /><rect x="6" y="6" width="4" height="4" fill="#fff3c2" stroke="#7a4a12" /></I>
);
const DetailsView = () => (
  <I><path d="M1.500 1.500h3v3h-3zM1.500 6.500h3v3h-3zM1.500 11.500h3v3h-3z" fill="#fff" stroke="#69788a" /><path d="M7 2.500h4M12 2.500h4M7 5h4M12 5h4M7 7.500h4M12 7.500h4M7 10h4M12 10h4M7 12.500h4M12 12.500h4" stroke="#69788a" /></I>
);
const LargeView = () => (
  <I><rect x="1.500" y="3.500" width="13" height="10" fill="#fff" stroke="#6f7d8d" /><rect x="3.500" y="5.500" width="9" height="6" fill="#5fa3da" /><path d="M3.500 11.500l4-3 5 1.500v1.500z" fill="#2d4c68" /></I>
);
const ErrorIcon = () => (
  <I w={33} h={33} vb="0 0 33 33">
    <circle cx="16.500" cy="16.500" r="15.500" fill="#c9ced1" stroke="#8d9498" />
    <circle cx="16.500" cy="16.500" r="14" fill="#c01c1c" />
    <path d="M4 14a12.500 12.500 0 0 1 25 0c-8 4-17 4-25 0z" fill="#e8645f" opacity=".6" />
    <path d="M10 10l13 13M23 10l-13 13" stroke="#f4f4f4" strokeWidth="5" />
  </I>
);
const Play = () => (
  <I w={56} h={64}>
    <g stroke="currentColor" strokeWidth="3" strokeLinejoin="round">
      <path d="M9 8.500v43L2 56V12.500z" />
      <path d="M11.500 11V4.500a3 3 0 0 1 4.500-2L52 24.500l-4 3.500L19 10v35L37.500 34" />
      <path d="M3 57L53 28.500v6L17 60.500a3 3 0 0 1-4.500-2.500l28-18" />
    </g>
  </I>
);
const Flowers = () => (
  <I w={79} h={38} vb="-7 0 79 38">
    <path d="M-7 38c8-9 31-7 39-6 10-6 30-5 40 0v6z" fill="#77a356" />
    <path d="M28 38C27 30 24 27 20 26M31 38c0-8 2-12 6-16M46 38c0-10-4-14-6-18M52 38c0-8 4-14 12-18M49 34V18" stroke="#3f9a3b" strokeWidth="3.500" />
    <path d="M8 18c0 5 7 7 7 13 0 4-3 6-7 6s-8-2-8-6c0-6 8-8 8-13z" fill="#6e5796" />
    <path d="M8 22c1 5 3 8 2 14M6 26c-2 3-3 6-2 9" stroke="#8e79b5" />
    <path d="M15 15l5 2 3-6 4 5 6-3c1 8-2 15-9 15s-9-7-9-13z" fill="#fbb91b" />
    <path d="M31 6l6 3 4-6 5 5 8-2c1 12-3 18-11 18S31 16 31 6z" fill="#fdb71a" />
    <path d="M40 3c2-3 5-3 6 0l-3 8z" fill="#f08a0c" />
    <path d="M35 8c0 6 3 11 7 14 4-3 8-8 8-14l-7 5z" fill="#ffd03e" />
    <circle cx="59" cy="29" r="6" fill="#f5b04c" /><circle cx="59" cy="29" r="2.500" fill="#e8731a" />
  </I>
);
const TaskView = () => (
  <I w={18} h={16}><path d="M1.500.5v3h9v-3M1.500 15.500v-3h9v3M1.500 5.500h9v5h-9zM14.500 0v3M14.500 8v8" stroke="#fff" strokeWidth="1.300" /><rect x="13" y="4" width="3" height="3" fill="#fff" /></I>
);
const ExplorerApp = () => (
  <I w={24} h={24}><path d="M1 3h9l2 2h10v5H1z" fill="#e9a825" /><path d="M1 6h22v14H1z" fill="#ffd25e" /><path d="M5 13h14v8h-3.500v-3h-7v3H5z" fill="#3e92dc" /><path d="M5 13h14v2H5z" fill="#6bb4ee" /></I>
);
const AppWindow = () => (
  <I w={24} h={20}><rect x=".5" y=".5" width="22" height="18" fill="#f4f6f6" stroke="#c5cccc" /><path d="M2 4h12v12H2z" fill="#6fa8a0" /><path d="M2 4h7v12H2z" fill="#2d6e6e" /><path d="M17 4v3M20 3v5M16 11h5M16 14h5" stroke="#8aa0a0" /></I>
);

/* ---------- data ---------- */

type DesktopItem = { col: number; row: number; label: React.ReactNode; icon: React.ReactNode };

const edge = <Pic><EdgeShapes /><Badge /></Pic>;
const firefox = <Pic><FirefoxShapes /><Badge /></Pic>;

const desktopItems: DesktopItem[] = [
  { col: 1, row: 1, label: "Recycle Bin", icon: <RecycleIcon /> },
  { col: 1, row: 2, label: "CCleaner", icon: <CCleanerIcon /> },
  { col: 1, row: 3, label: <>Adobe<br />Acrobat</>, icon: <AcrobatIcon /> },
  { col: 1, row: 4, label: "coastuse.rtf", icon: <WordFileIcon /> },
  { col: 1, row: 5, label: "Firefox", icon: firefox },
  { col: 1, row: 6, label: <>Google<br />Chrome</>, icon: <ChromeIcon /> },
  { col: 2, row: 1, label: <>VLC media<br />player</>, icon: <VlcIcon /> },
  { col: 2, row: 2, label: <>Microsoft<br />Edge</>, icon: edge },
  { col: 2, row: 3, label: "associatio...", icon: <WordFileIcon /> },
  { col: 2, row: 4, label: "boysexcha...", icon: <ImageFileIcon /> },
  { col: 2, row: 5, label: "constructi...", icon: <WordFileIcon /> },
  { col: 2, row: 6, label: "eastboy.jpg", icon: <ImageFileIcon /> },
  { col: 3, row: 1, label: "engineerin...", icon: <ImageFileIcon /> },
  { col: 3, row: 2, label: "forwardem...", icon: <WordFileIcon /> },
  { col: 3, row: 3, label: "includingr...", icon: <WordFileIcon /> },
  { col: 3, row: 4, label: "listsarchite...", icon: <ImageFileIcon /> },
  { col: 3, row: 5, label: "technolog...", icon: <ImageFileIcon /> },
  { col: 5, row: 4, label: "FLiNG-Stan...", icon: <DxIcon /> },
];

type FileRow = { name: string; icon?: React.ReactNode; date: string; type: string; size: string };

const img = <ImgSmall />;
const fileGroups: { title: string; rows: FileRow[] }[] = [
  { title: "Today (1)", rows: [
    { name: "FLiNG-Standalone.24.157.zip", icon: <Rar />, date: "10/1/2025 7:19 PM", type: "WinRAR ZIP archive", size: "155,656 KB" },
  ] },
  { title: "", rows: [
    { name: "", date: "9/17/2025 6:28 PM", type: "File", size: "104,448 KB" },
    { name: "", date: "9/17/2025 6:00 PM", type: "Application exten...", size: "64,048 KB" },
  ] },
  { title: "", rows: [
    { name: "", date: "10/6/2024 4:41 AM", type: "JPG File", size: "7 KB" },
    { name: "christmasbeing.png", icon: img, date: "6/14/2022 11:27 AM", type: "PNG File", size: "3 KB" },
    { name: "takeninformation.png", icon: img, date: "12/30/2021 12:55 AM", type: "PNG File", size: "3 KB" },
    { name: "parentsoffice.jpg", icon: img, date: "2/10/2021 12:53 AM", type: "JPG File", size: "11 KB" },
    { name: "selectionbring.jpg", icon: img, date: "5/25/2020 4:17 AM", type: "JPG File", size: "18 KB" },
    { name: "hotelsaturday.png", icon: img, date: "11/30/2017 7:38 AM", type: "PNG File", size: "3 KB" },
    { name: "transferrentals.jpg", icon: img, date: "6/16/2017 9:06 PM", type: "JPG File", size: "17 KB" },
  ] },
];

type Node = { name: string; depth: number; icon: React.ReactNode; open?: boolean; closed?: boolean; selected?: boolean };

const treeTop: Node[] = [
  { name: "Videos", depth: 0, icon: <Videos />, closed: true },
  { name: "Local Disk (C:)", depth: 0, icon: <Disk />, open: true },
  { name: "$WinREAgent", depth: 1, icon: <Folder pale />, closed: true },
];
const treeBottom: Node[] = [
  { name: ".ms-ad", depth: 3, icon: <Folder /> },
  { name: "3D Objects", depth: 3, icon: <Cube /> },
  { name: "AppData", depth: 3, icon: <Folder pale />, closed: true },
  { name: "Contacts", depth: 3, icon: <Contacts /> },
  { name: "Desktop", depth: 3, icon: <DesktopGlyph /> },
  { name: "Documents", depth: 3, icon: <Documents />, closed: true },
  { name: "Downloads", depth: 3, icon: <DownArrow />, open: true, selected: true },
];

const TreeItem = ({ node }: { node: Node }) => (
  <TreeRow href="#" $depth={node.depth} $selected={node.selected}>
    <Twisty>
      {node.open && <Chevron dir="down" color="#b0b0b0" w={1.500} />}
      {node.closed && <Chevron dir="right" color="#cfcfcf" w={1.300} />}
    </Twisty>
    {node.icon}
    {node.name}
  </TreeRow>
);

/* ---------- app ---------- */

const ExplorerWindow = () => (
  <Explorer aria-label="Downloads">
    <TitleBar>
      <QuickTools>
        <DownArrow />
        <Bar />
        <DocCheck />
        <Folder />
        <I w={9} h={8}><path d="M1 1h7" stroke="#222" /><path d="M1 4h7L4.500 7.500z" fill="#222" /></I>
        <Bar />
      </QuickTools>
      <WindowTitle>Downloads</WindowTitle>
      <CaptionButton aria-label="Minimize"><I w={10} h={10}><path d="M0 5.500h10" stroke="currentColor" /></I></CaptionButton>
      <CaptionButton aria-label="Maximize"><I w={10} h={10}><path d="M.5.500h9v9h-9z" stroke="currentColor" /></I></CaptionButton>
      <CaptionButton aria-label="Close"><I w={10} h={10}><path d="M0 0l10 10M10 0L0 10" stroke="currentColor" /></I></CaptionButton>
    </TitleBar>
    <TabStrip>
      <Tab $kind="file">File</Tab>
      <Tab $kind="active">Home</Tab>
      <Tab>Share</Tab>
      <Tab>View</Tab>
      <TabTools>
        <Chevron dir="up" color="#999" w={1.300} />
        <I w={16} h={16}>
          <circle cx="8" cy="8" r="8" fill="#0463b0" />
          <text x="8" y="12.500" textAnchor="middle" fontFamily="Open Sans, sans-serif" fontWeight="700" fontSize="12" fill="#fff">?</text>
        </I>
      </TabTools>
    </TabStrip>
    <Ribbon>
      <Group $width={263}>
        <GroupBody>
          <BigButton $width={70}><Pin />Pin to Quick<br />access</BigButton>
          <BigButton $width={40} $off><CopyBig />Copy</BigButton>
          <BigButton $width={44} $off><PasteBig />Paste</BigButton>
          <Stack>
            <SmallButton $off><Cut />Cut</SmallButton>
            <SmallButton $off><CopyPath />Copy path</SmallButton>
            <SmallButton $off><PasteShortcut />Paste shortcut</SmallButton>
          </Stack>
        </GroupBody>
        <GroupLabel>Clipboard</GroupLabel>
      </Group>
      <Group $width={165}>
        <GroupBody>
          <Stack $wide>
            <SmallButton $off><MoveTo />Move to <Caret off /></SmallButton>
            <SmallButton $off><CopyTo />Copy to <Caret off /></SmallButton>
          </Stack>
          <Divider />
          <Stack $wide>
            <SmallButton><DeleteX />Delete <Caret /></SmallButton>
            <SmallButton $off><Rename />Rename</SmallButton>
          </Stack>
        </GroupBody>
        <GroupLabel>Organize</GroupLabel>
      </Group>
      <Group $width={83}>
        <GroupBody>
          <BigButton $width={42}><NewFolder />New<br />folder</BigButton>
          <Stack>
            <SmallButton aria-label="New item"><NewItem /><Caret /></SmallButton>
            <SmallButton aria-label="Easy access"><EasyAccess /><Caret /></SmallButton>
          </Stack>
        </GroupBody>
        <GroupLabel>New</GroupLabel>
      </Group>
      <Group $width={133}>
        <GroupBody>
          <BigButton $width={58}><DocCheck big />Properties<Caret /></BigButton>
          <Stack>
            <SmallButton $off><OpenIcon />Open <Caret off /></SmallButton>
            <SmallButton $off><EditIcon />Edit</SmallButton>
            <SmallButton><HistoryIcon />History</SmallButton>
          </Stack>
        </GroupBody>
        <GroupLabel>Open</GroupLabel>
      </Group>
      <Group $width={115}>
        <GroupBody>
          <Stack>
            <SmallButton><Squares mode="all" />Select all</SmallButton>
            <SmallButton><Squares mode="none" />Select none</SmallButton>
            <SmallButton><Squares mode="invert" />Invert selection</SmallButton>
          </Stack>
        </GroupBody>
        <GroupLabel>Select</GroupLabel>
      </Group>
    </Ribbon>
    <AddressRow>
      <NavButtons>
        <button aria-label="Back"><Arrow dir="left" off /></button>
        <button aria-label="Forward"><Arrow dir="right" off /></button>
        <button aria-label="Recent"><Chevron dir="down" color="#cfcfcf" w={1.300} /></button>
        <button aria-label="Up"><Arrow dir="up" /></button>
      </NavButtons>
      <AddressBox>
        <DownArrow />
        <Crumbs>
          {["This PC", "Local Disk (C:)", "Users", "admin", "Downloads"].map((c) => (
            <li key={c}><SmallChevron /><a href="#">{c}</a></li>
          ))}
        </Crumbs>
        <BoxButton aria-label="Previous locations"><Chevron dir="down" color="#777" /></BoxButton>
        <BoxButton $line aria-label="Refresh"><Refresh /></BoxButton>
      </AddressBox>
      <SearchBox>
        <input type="text" aria-label="Search Downloads" placeholder="Search Downloads" />
        <Lens />
      </SearchBox>
    </AddressRow>
    <Body>
      <Tree>
        {treeTop.map((n) => <TreeItem key={n.name} node={n} />)}
        <TreeGap />
        {treeBottom.map((n) => <TreeItem key={n.name} node={n} />)}
      </Tree>
      <Scroll $dir="v">
        <button aria-label="Scroll up"><Chevron dir="up" color="#505050" /></button>
        <Thumb $dir="v" />
        <button aria-label="Scroll down"><Chevron dir="down" color="#505050" /></button>
      </Scroll>
      <Pane>
        <FileArea>
          <FileTable>
            <colgroup>
              <col />
              <col width={144} />
              <col width={120} />
              <col width={80} />
            </colgroup>
            <thead>
              <tr>
                <th>Name</th>
                <th>Date modified<SortMark><I w={9} h={5}><path d="M1 0l3.500 3.500L8 0" stroke="#888" /></I></SortMark></th>
                <th>Type</th>
                <th>Size</th>
              </tr>
            </thead>
            {fileGroups.map((g, i) => (
              <tbody key={i}>
                <tr>
                  <GroupCell colSpan={4}>
                    <GroupLine><Chevron dir="down" color="#777" w={1.200} />{g.title}</GroupLine>
                  </GroupCell>
                </tr>
                {g.rows.map((r) => (
                  <tr key={r.date}>
                    <td><FileName>{r.icon}{r.name}</FileName></td>
                    <td>{r.date}</td>
                    <td>{r.type}</td>
                    <td>{r.size}</td>
                  </tr>
                ))}
              </tbody>
            ))}
          </FileTable>
        </FileArea>
        <Scroll $dir="h">
          <button aria-label="Scroll left"><Chevron dir="left" color="#505050" /></button>
          <Thumb $dir="h" />
          <button aria-label="Scroll right"><Chevron dir="right" color="#505050" /></button>
        </Scroll>
      </Pane>
    </Body>
    <StatusBar>
      10 items
      <ViewButtons>
        <ViewButton $on aria-label="Details view"><DetailsView /></ViewButton>
        <ViewButton aria-label="Large icons view"><LargeView /></ViewButton>
      </ViewButtons>
    </StatusBar>
  </Explorer>
);

export default function App() {
  return (
    <Screen>
      <GlobalStyle />
      <Desktop>
        <IconGrid>
          {desktopItems.map((d, i) => (
            <Shortcut key={i} $col={d.col} $row={d.row}>
              <ShortcutButton>{d.icon}<span>{d.label}</span></ShortcutButton>
            </Shortcut>
          ))}
        </IconGrid>
        <ExplorerWindow />
        <Dialog role="alertdialog" aria-labelledby="error-title">
          <DialogTitle>
            <h2 id="error-title">FLiNG-Standalone216.677.exe - System Error</h2>
            <button aria-label="Close"><I w={12} h={12}><path d="M1 1l10 10M11 1L1 11" stroke="#000" /></I></button>
          </DialogTitle>
          <DialogBody>
            <ErrorIcon />
            <p>The code execution cannot proceed because borlndmm.dll<br />was not found. Reinstalling the program may fix this problem.</p>
          </DialogBody>
          <DialogFooter><OkButton>OK</OkButton></DialogFooter>
        </Dialog>
        <Watermark><span>ANY</span><Play /><span>RUN</span></Watermark>
      </Desktop>
      <Taskbar>
        <TaskButton aria-label="Start">
          <I w={16} h={16}><path d="M0 2.300l6.800-1v6.200H0zM7.700 1.200L16 0v7.500H7.700zM0 8.400h6.800v6.300L0 13.700zM7.700 8.400H16V16l-8.300-1.200z" fill="#fff" /></I>
        </TaskButton>
        <TaskSearch>
          <Lens size={17} flip color="#222" />
          <input type="text" aria-label="Type here to search" placeholder="Type here to search" />
          <Flowers />
        </TaskSearch>
        <TaskButton aria-label="Task view"><TaskView /></TaskButton>
        <TaskApps>
          <TaskButton aria-label="Microsoft Edge"><Pic size={24}><EdgeShapes /></Pic></TaskButton>
          <TaskButton $open aria-label="File Explorer"><ExplorerApp /></TaskButton>
          <TaskButton aria-label="Firefox"><Pic size={24}><FirefoxShapes /></Pic></TaskButton>
          <TaskButton $open $active aria-label="System Error"><AppWindow /></TaskButton>
        </TaskApps>
        <Tray>
          <button aria-label="Show hidden icons"><I w={12} h={8}><path d="M1 7l5-5 5 5" stroke="#fff" strokeWidth="1.200" /></I></button>
          <button aria-label="Meet now"><I><path d="M3.500 2.500C6 .5 9.500.5 12 2.500M3.500 14.500c2.500 2 6 2 8.500 0M3 4.500h7v7.500H3zM10 7.500l3-2v5.500l-3-2" stroke="#fff" strokeWidth="1.100" /></I></button>
          <button aria-label="Network"><I><path d="M5.500 3.500h10v8h-10M9.500 11.500v3M6.500 14.500h7M.5 1.500h4v4h-4zM2.500 5.500v9" stroke="#fff" /></I></button>
          <button aria-label="Volume"><I w={17} h={16}><path d="M1 5.500h2.500L7 2v12l-3.500-3.500H1zM9 6c1 1.200 1 2.800 0 4M11.300 4c2 2.300 2 5.700 0 8M13.500 2c3 3.500 3 8.500 0 12" stroke="#fff" strokeWidth="1.100" /></I></button>
          <Clock>7:20 PM<br />10/1/2025</Clock>
          <button aria-label="Notifications"><I w={16} h={16}><path d="M.5.500h15v12h-5L8 15l-2.500-2.500h-5z" stroke="#fff" /></I></button>
          <ShowDesktop />
        </Tray>
      </Taskbar>
    </Screen>
  );
}
